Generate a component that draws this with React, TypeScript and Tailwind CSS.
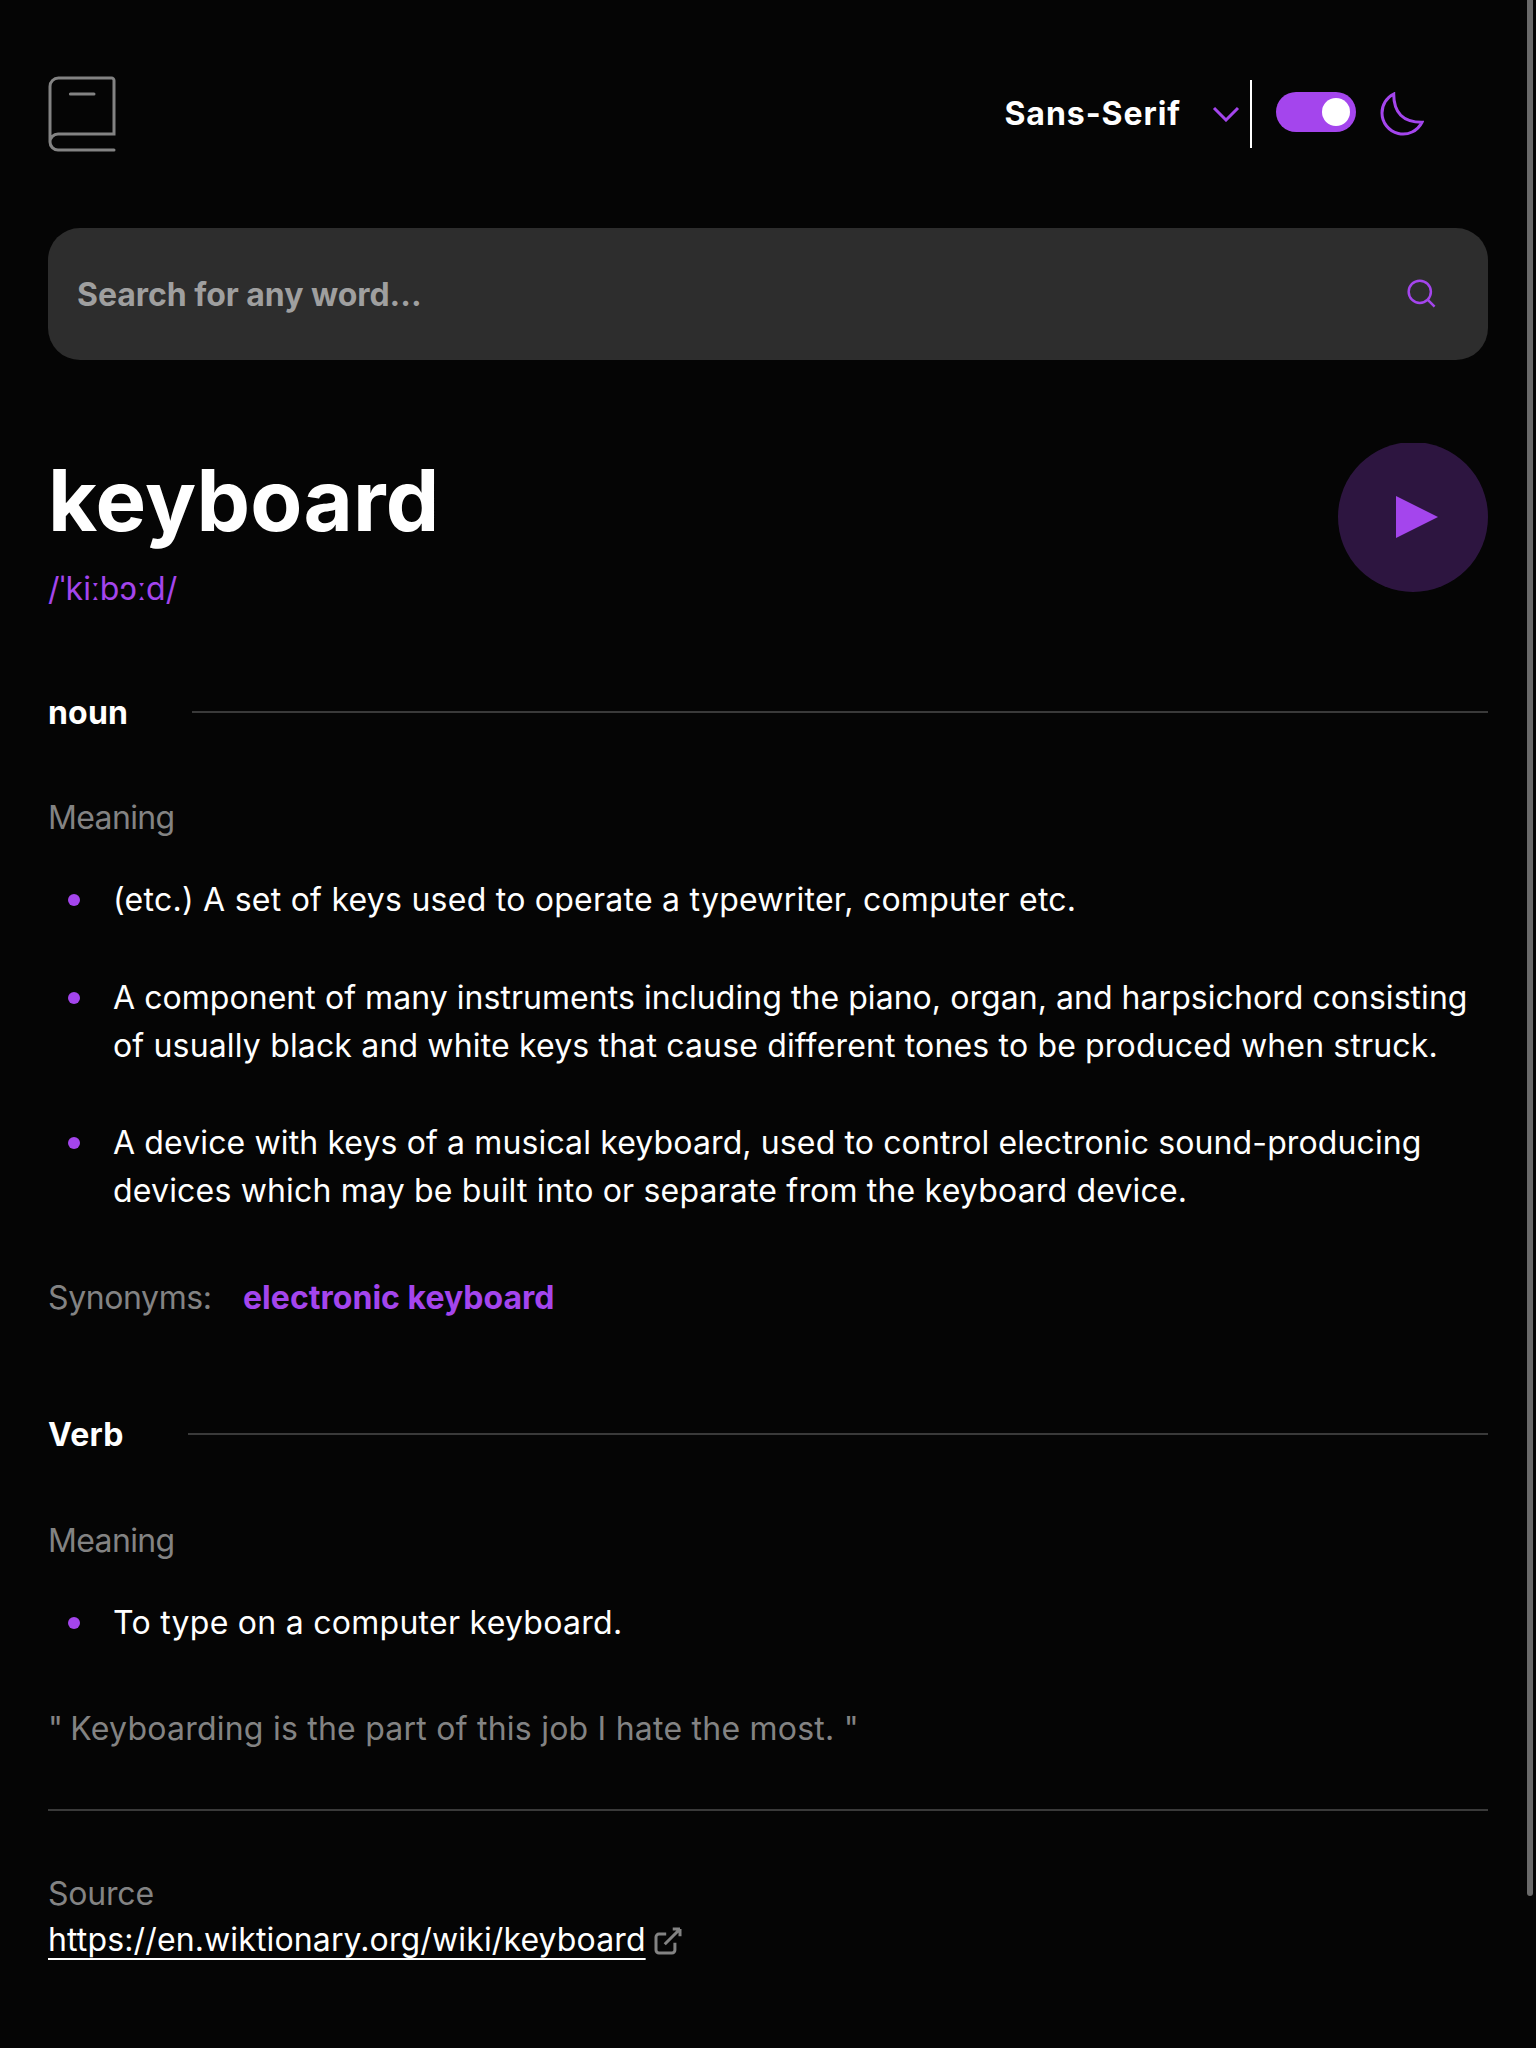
import React from "react";

function Heading({ children }: { children: React.ReactNode }) {
  return (
    <div className="flex h-12 items-center gap-16">
      <h2 className="text-[32px] leading-[48px] font-bold tracking-[0.2px] text-white">{children}</h2>
      <div className="mb-0.5 h-0.5 flex-1 bg-[#3a3a3a]" />
    </div>
  );
}

function Definition({ children }: { children: React.ReactNode }) {
  return (
    <li className="flex first:mb-px">
      <span className="mt-[18px] mr-[33px] ml-5 size-3 shrink-0 rounded-full bg-[#a445ed]" />
      <span className="text-[32px] leading-[48px] whitespace-nowrap text-white">{children}</span>
    </li>
  );
}

export default function App() {
  return (
    <div className="relative h-[2048px] w-[1536px] overflow-hidden bg-[#050505] px-12 font-['Inter',sans-serif]">
      <header className="flex h-[228px] items-start justify-between pr-16">
        <svg className="mt-[76px] h-[76px] w-[68px]" viewBox="0 0 34 38" fill="none" stroke="#838383" strokeWidth="1.5" strokeLinecap="round">
          <path d="M1 33V5.2A4.2 4.2 0 0 1 5.2 1h26.6A1.2 1.2 0 0 1 33 2.2V29H5M33 37H5a4 4 0 1 1 0-8" />
          <path d="M11.2 9h11.8" />
        </svg>
        <div className="mt-20 flex h-[68px] items-start">
          <span className="mt-[10px] text-[32px] leading-[48px] font-bold tracking-[0.95px] text-white">Sans-Serif</span>
          <svg className="mt-[26px] ml-[31px] h-4 w-7" viewBox="0 0 14 8" fill="none" stroke="#a445ed" strokeWidth="1.5">
            <path d="m1 1 6 6 6-6" />
          </svg>
          <div className="ml-[10px] h-[68px] w-0.5 bg-white" />
          <div className="mt-3 ml-6 flex h-10 w-20 items-center justify-end rounded-full bg-[#a445ed] pr-1.5">
            <div className="size-7 rounded-full bg-white" />
          </div>
          <svg className="mt-3 ml-6 size-11" viewBox="0 0 22 22" fill="none" stroke="#a445ed" strokeWidth="1.5">
            <path d="M1 10.449a10.544 10.544 0 0 0 19.993 4.686C11.544 15.135 6.858 10.448 6.858 1A10.545 10.545 0 0 0 1 10.449Z" />
          </svg>
        </div>
      </header>

      <div className="flex h-[132px] items-center justify-between rounded-[32px] bg-[#2d2d2d] pr-[51px] pl-[29px]">
        <span className="mt-0.5 text-[32px] leading-[48px] font-bold tracking-[-0.04px] text-[#9f9f9f]">Search for any word...</span>
        <svg className="size-[30px]" viewBox="0 0 18 18" fill="none" stroke="#a445ed" strokeWidth="1.5">
          <path d="m12.663 12.663 3.887 3.887M1 7.664a6.665 6.665 0 1 0 13.33 0 6.665 6.665 0 0 0-13.33 0Z" />
        </svg>
      </div>

      <div className="flex h-[329px] justify-between pt-[83px]">
        <div className="pt-[7px]">
          <h1 className="text-[85px] leading-[102px] font-bold tracking-[0.2px] text-white">keyboard</h1>
          <p className="mt-[13px] text-[32px] leading-[48px] tracking-[0.15px] text-[#a445ed]">/ˈkiːbɔːd/</p>
        </div>
        <div className="h-[149px] overflow-hidden">
          <svg className="-mt-px size-[150px]" viewBox="0 0 75 75" fill="#a445ed">
            <circle cx="37.5" cy="37.5" r="37.5" opacity=".26" />
            <path d="M29 27v21l21-10.5z" />
          </svg>
        </div>
      </div>

      <Heading>noun</Heading>
      <p className="mt-[57px] text-[32px] leading-[48px] tracking-[-0.65px] text-[#838383]">Meaning</p>
      <ul className="mt-[34px] flex flex-col gap-[49px]">
        <Definition>
          <span className="tracking-[0.25px]">(etc.) A set of keys used to operate a typewriter, computer etc.</span>
        </Definition>
        <Definition>
          <span className="block tracking-[0.05px]">A component of many instruments including the piano, organ, and harpsichord consisting</span>
          <span className="block tracking-[0.16px]">of usually black and white keys that cause different tones to be produced when struck.</span>
        </Definition>
        <Definition>
          <span className="block tracking-[0.12px]">A device with keys of a musical keyboard, used to control electronic sound-producing</span>
          <span className="block tracking-[0.18px]">devices which may be built into or separate from the keyboard device.</span>
        </Definition>
      </ul>
      <div className="mt-[59px] flex gap-8 text-[32px] leading-[48px]">
        <span className="w-[163px] tracking-[-0.4px] text-[#838383]">Synonyms:</span>
        <span className="font-bold tracking-[0.03px] text-[#a445ed]">electronic keyboard</span>
      </div>

      <div className="mt-[89px]">
        <Heading>Verb</Heading>
      </div>
      <p className="mt-[58px] text-[32px] leading-[48px] tracking-[-0.65px] text-[#838383]">Meaning</p>
      <ul className="mt-[34px]">
        <Definition>
          <span className="tracking-[0.27px]">To type on a computer keyboard.</span>
        </Definition>
      </ul>
      <p className="mt-[58px] text-[32px] leading-[48px] tracking-[0.23px] text-[#838383]">
        <span className="tracking-[-0.8px]">" </span>Keyboarding is the part of this job I hate the most. "
      </p>

      <div className="mt-[56px] h-0.5 bg-[#3a3a3a]" />
      <p className="mt-[59px] text-[32px] leading-[48px] tracking-[-0.2px] text-[#838383]">Source</p>
      <div className="-mt-0.5 flex items-start gap-2">
        <a className="text-[32px] leading-[48px] tracking-[0.13px] text-white underline decoration-2 underline-offset-[7px]">https://en.wiktionary.org/wiki/keyboard</a>
        <svg className="mt-[11px] size-7" viewBox="0 0 14 14" fill="none" stroke="#838383" strokeWidth="1.5">
          <path d="M6.09 3.545H2.456A1.455 1.455 0 0 0 1 5v6.545A1.455 1.455 0 0 0 2.455 13H9a1.455 1.455 0 0 0 1.455-1.455V7.91m-5.091.727L13 1m0 0H9.364M13 1v3.636" />
        </svg>
      </div>

      <div className="absolute top-0 left-[1527px] h-[1896px] w-1.5 rounded-b-full bg-[#6a6a6a]" />
    </div>
  );
}
